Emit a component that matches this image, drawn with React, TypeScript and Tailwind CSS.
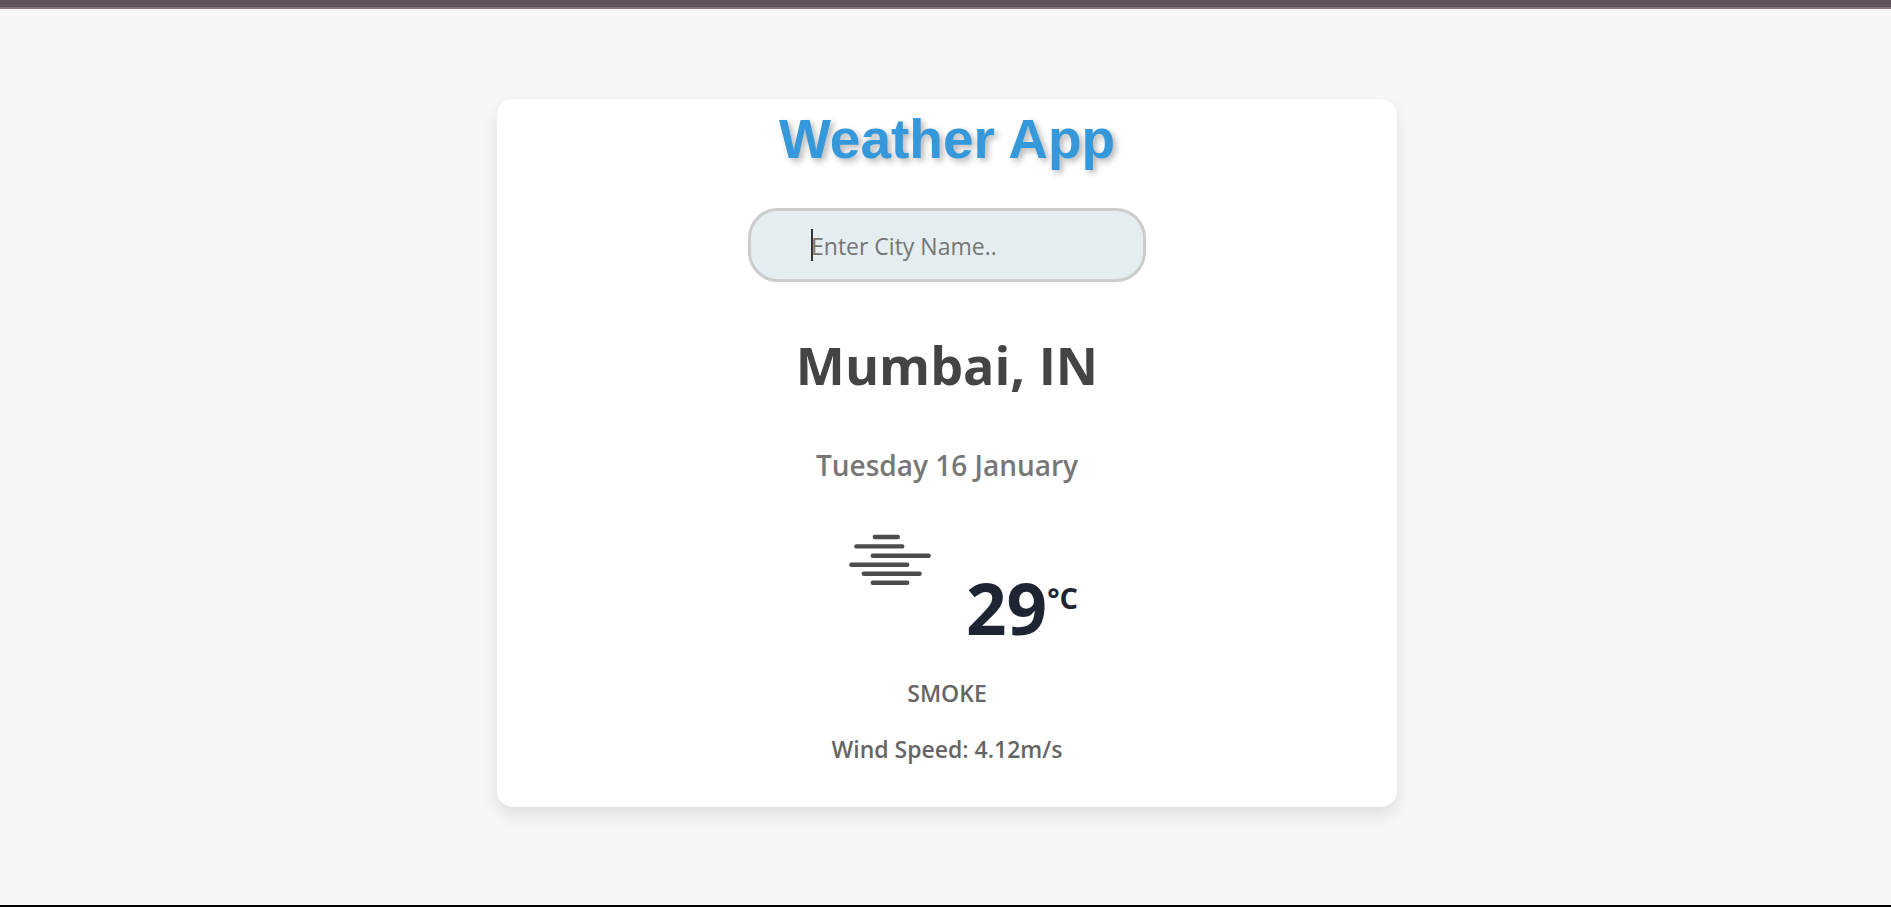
import { useState } from "react";

function SmokeIcon() {
  return (
    <svg viewBox="0 0 100 100" className="size-[100px]" role="img" aria-label="Smoke">
      <g stroke="#4b4d4c" strokeWidth="4.4" strokeLinecap="round">
        <path d="M34.8 27H57.8" />
        <path d="M16.4 36.4H62.2" />
        <path d="M32.8 45.7H88.6" />
        <path d="M11.4 54.7H67.2" />
        <path d="M23.8 63.7H79.6" />
        <path d="M32.8 72.7H67.2" />
      </g>
    </svg>
  );
}

export default function App() {
  const [city, setCity] = useState("");

  return (
    <div className="flex min-h-screen flex-col border-b-2 border-black bg-[#f7f7f7] font-['Open_Sans','Noto_Sans',sans-serif]">
      <div className="h-[9px] border-b-2 border-[#84747f] bg-[#62525d]" />
      <main className="flex grow justify-center pt-[90px] pl-[3px]">
        <section className="flex w-full max-w-[900px] flex-col items-center self-start rounded-2xl bg-white pt-2 pb-[42px] text-center shadow-[0_8px_16px_rgba(0,0,0,0.1)]">
          <h1 className="font-['Liberation_Sans',Arial,sans-serif] text-[55px] leading-16 font-bold text-[#3498db] [text-shadow:3px_3px_6px_rgba(0,0,0,0.3)]">
            Weather App
          </h1>
          <div className="relative mt-[37px] w-full max-w-[398px]">
            <input
              type="text"
              aria-label="City name"
              placeholder="Enter City Name.."
              value={city}
              onChange={(e) => setCity(e.target.value)}
              className="h-[74px] w-full rounded-[30px] border-[3px] border-[#ccc] bg-[#e4edf0] pt-0.5 pr-5 pl-[60px] text-[23px] text-[#333] caret-transparent outline-none placeholder:text-[#757575]"
            />
            <span className="pointer-events-none absolute top-[21px] left-[63px] h-8 w-0.5 bg-[#333]" />
          </div>
          <h2 className="mt-[47px] text-[52px] leading-[72px] font-bold text-[#444]">Mumbai, IN</h2>
          <p className="mt-11 text-[28px] leading-10 font-semibold text-[#777]">Tuesday 16 January</p>
          <div className="mt-[25px] flex items-start gap-[26px] pl-6">
            <SmokeIcon />
            <p className="mt-[50px] flex items-start text-[71px] leading-24 font-bold text-[#1e2432]">
              29
              <sup className="top-0 mt-[18px] text-[29px] leading-10 font-bold">°C</sup>
            </p>
          </div>
          <p className="mt-[21px] text-[23px] leading-8 font-semibold text-[#666]">SMOKE</p>
          <p className="mt-6 text-[23px] leading-8 font-semibold text-[#666]">Wind Speed: 4.12m/s</p>
        </section>
      </main>
    </div>
  );
}
